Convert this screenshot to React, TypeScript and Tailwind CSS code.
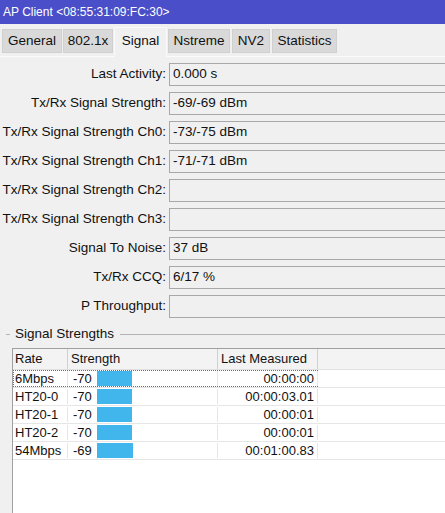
import React from "react";

const rows: [string, string][] = [
  ["Last Activity:", "0.000 s"],
  ["Tx/Rx Signal Strength:", "-69/-69 dBm"],
  ["Tx/Rx Signal Strength Ch0:", "-73/-75 dBm"],
  ["Tx/Rx Signal Strength Ch1:", "-71/-71 dBm"],
  ["Tx/Rx Signal Strength Ch2:", ""],
  ["Tx/Rx Signal Strength Ch3:", ""],
  ["Signal To Noise:", "37 dB"],
  ["Tx/Rx CCQ:", "6/17 %"],
  ["P Throughput:", ""],
];

const tableRows: [string, string, number, string][] = [
  ["6Mbps", "-70", 35, "00:00:00"],
  ["HT20-0", "-70", 35, "00:00:03.01"],
  ["HT20-1", "-70", 35, "00:00:01"],
  ["HT20-2", "-70", 35, "00:00:01"],
  ["54Mbps", "-69", 36, "00:01:00.83"],
];

const tabs: { name: string; w: string; ml: string; sel?: boolean }[] = [
  { name: "General", w: "w-[60px]", ml: "ml-[2px]" },
  { name: "802.1x", w: "w-[50px]", ml: "ml-[1px]" },
  { name: "Signal", w: "w-[53px]", ml: "ml-[1px]", sel: true },
  { name: "Nstreme", w: "w-[62px]", ml: "ml-[1px]" },
  { name: "NV2", w: "w-[38px]", ml: "ml-[2px]" },
  { name: "Statistics", w: "w-[65px]", ml: "ml-[2px]" },
];

export default function App() {
  return (
    <div className="w-[445px] h-[513px] bg-[#f0f0f0] overflow-hidden flex flex-col font-['Liberation_Sans',Arial,sans-serif] text-[#111]">
      <div className="h-[24px] shrink-0 bg-[#4a4ec8] text-white text-[12px] pl-[3px] flex items-center">
        AP Client &lt;08:55:31:09:FC:30&gt;
      </div>
      <div className="h-[33px] shrink-0 flex items-start border-b border-[#fbfbfb] text-[13.5px]">
        {tabs.map((t) =>
          t.sel ? (
            <div
              key={t.name}
              className={`${t.w} ${t.ml} shrink-0 mt-[3px] h-[30px] bg-[#f0f0f0] border-x border-t border-[#fafafa] flex items-center justify-center pb-[3px]`}
            >
              {t.name}
            </div>
          ) : (
            <div
              key={t.name}
              className={`${t.w} ${t.ml} shrink-0 mt-[5px] h-[24px] bg-[#d9d9d9] border border-[#d0d0d0] flex items-center justify-center`}
            >
              {t.name}
            </div>
          )
        )}
      </div>
      <div className="flex flex-col gap-[6px] pt-[6px] text-[13.5px] shrink-0 overflow-hidden">
        {rows.map(([label, value]) => (
          <div key={label} className="flex items-center h-[23px]">
            <div className="w-[166px] shrink-0 text-right whitespace-nowrap">{label}</div>
            <div className="ml-[3px] w-[300px] h-[23px] shrink-0 border border-[#a8a8a8] bg-[#f0f0f0] flex items-center pl-[3px]">
              {value}
            </div>
          </div>
        ))}
      </div>
      <div className="mt-[9px] h-[14px] shrink-0 flex items-center text-[13.5px]">
        <div className="ml-[6px] w-[4px] h-px bg-[#b4b4b4]" />
        <div className="ml-[5px] whitespace-nowrap">Signal Strengths</div>
        <div className="ml-[6px] flex-1 h-px bg-[#b4b4b4]" />
      </div>
      <div className="mt-[7px] ml-[12px] flex-1 flex flex-col border-l border-t border-[#a0a0a0] bg-white text-[13px]">
        <div className="h-[21px] shrink-0 flex bg-[#f3f3f3] border-b border-[#e0e0e0]">
          <div className="w-[55px] shrink-0 pl-[2px] flex items-center border-r border-[#d0d0d0]">Rate</div>
          <div className="w-[150px] shrink-0 pl-[3px] flex items-center border-r border-[#d0d0d0]">Strength</div>
          <div className="w-[100px] shrink-0 pl-[3px] flex items-center border-r border-[#d0d0d0]">Last Measured</div>
          <div className="flex-1" />
        </div>
        {tableRows.map(([rate, s, bw, lm], i) => (
          <div key={rate} className="h-[18px] shrink-0 flex border-b border-[#e6e6e6]">
            <div
              className={`w-[305px] shrink-0 flex ${i === 0 ? "border border-dotted border-[#707070]" : "border border-transparent"}`}
            >
              <div className="w-[54px] shrink-0 pl-[1px] flex items-center border-r border-[#e6e6e6]">{rate}</div>
              <div className="w-[150px] shrink-0 pl-[5px] flex items-center border-r border-[#e6e6e6]">
                <span className="w-[24px]">{s}</span>
                <span className="h-[15px] bg-[#40b6ec]" style={{ width: bw }} />
              </div>
              <div className="w-[100px] shrink-0 pr-[3px] flex items-center justify-end border-r border-[#e6e6e6]">{lm}</div>
            </div>
            <div className="flex-1" />
          </div>
        ))}
        <div className="flex-1" />
      </div>
    </div>
  );
}
